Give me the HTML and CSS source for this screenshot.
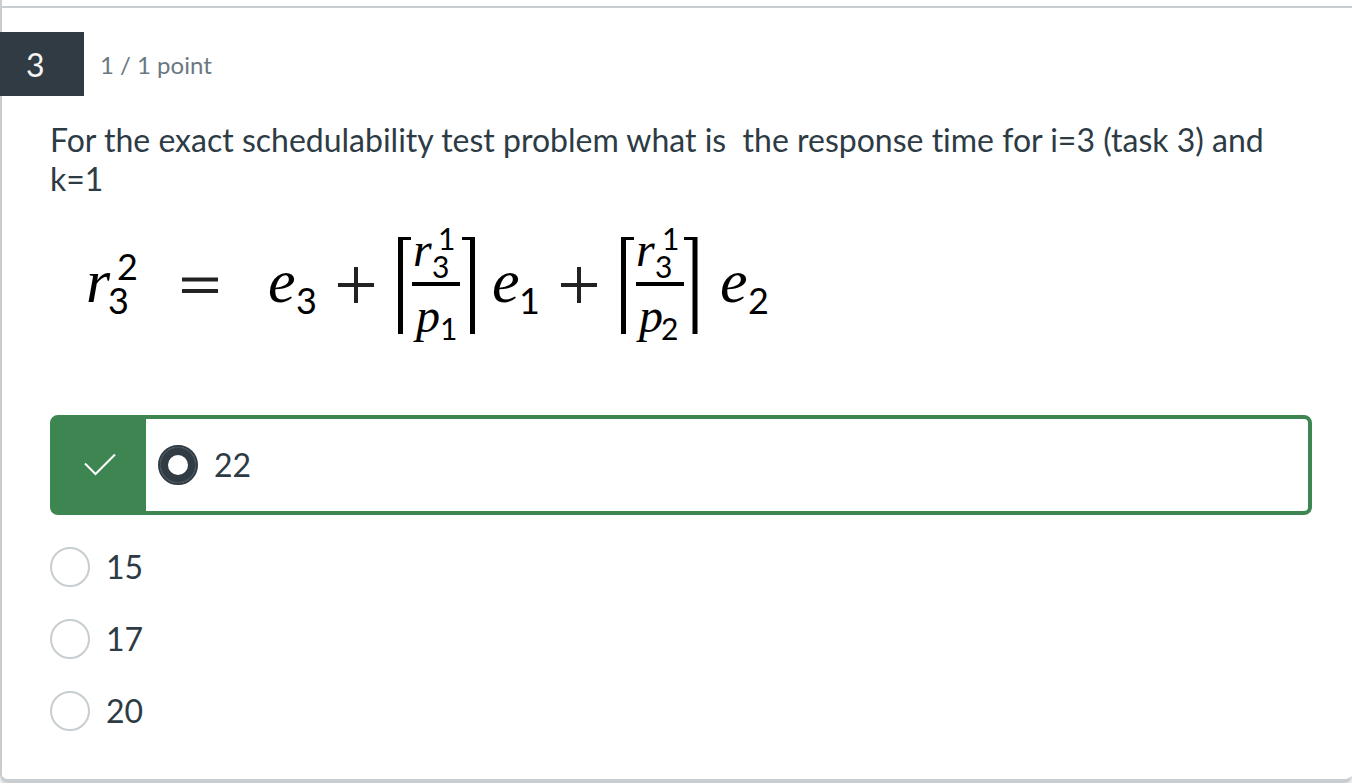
FILE: index.html
```
<!DOCTYPE html>
<html lang="en">
<head>
<meta charset="utf-8">
<meta name="viewport" content="width=device-width, initial-scale=1">
<title>Question 3</title>
<link rel="stylesheet" href="styles.css">
</head>
<body>
<main class="card">
  <section class="question">
    <header class="question-header">
      <span class="question-number">3</span>
      <span class="points">1 / 1 point</span>
    </header>
    <div class="question-body">
      <p class="prompt" id="prompt">For the exact schedulability test problem what is&nbsp; the response time for i=3 (task 3) and k=1</p>
      <svg class="formula" width="740" height="144" viewBox="50 215 740 144" role="img" aria-label="Response time equation">
        <g class="variable">
          <text x="86" y="302">r</text>
          <text x="268" y="302">e</text>
          <text x="492" y="302">e</text>
          <text x="720" y="302">e</text>
        </g>
        <g class="variable variable-small">
          <text x="413" y="266">r</text>
          <text x="416" y="332">p</text>
          <text x="636" y="266">r</text>
          <text x="639" y="332">p</text>
        </g>
        <g class="script">
          <text x="117" y="280">2</text>
          <text x="108" y="314">3</text>
          <text x="296" y="314">3</text>
          <text x="519" y="314">1</text>
          <text x="748" y="314">2</text>
        </g>
        <g class="script script-small">
          <text x="438" y="250">1</text>
          <text x="432" y="278">3</text>
          <text x="440" y="340">1</text>
          <text x="662" y="250">1</text>
          <text x="655" y="278">3</text>
          <text x="661" y="340">2</text>
        </g>
        <path class="operator" d="M182 279.5H218M182 291H218M338 285H374M356 267V303M561 285H597M579 267V303"/>
        <path class="fraction-bar" d="M412 284H460M636 284H684"/>
        <path class="bracket-side" d="M400.500 237V334M472.500 237V334M623.500 237V334M695 237V334"/>
        <path class="bracket-top" d="M398 238.500H411M462 238.500H475M621 238.500H634M684 238.500H697"/>
      </svg>
      <div class="answers" role="radiogroup" aria-labelledby="prompt">
        <div class="correct">
          <span class="correct-mark">
            <svg width="32" height="24" viewBox="0 0 32 24" aria-hidden="true"><path d="M1 10.500L11.500 21L31 1.500" fill="none" stroke="#fff" stroke-width="2"/></svg>
          </span>
          <label class="answer"><input class="radio" type="radio" name="answer" checked><span>22</span></label>
        </div>
        <label class="answer"><input class="radio" type="radio" name="answer"><span>15</span></label>
        <label class="answer"><input class="radio" type="radio" name="answer"><span>17</span></label>
        <label class="answer"><input class="radio" type="radio" name="answer"><span>20</span></label>
      </div>
    </div>
  </section>
</main>
</body>
</html>
```
FILE: styles.css
```
* {
  box-sizing: border-box;
}

body {
  margin: 0;
  background: #fff;
  color: #2d3b45;
  font-family: Lato, "Open Sans", sans-serif;
  font-size: 32px;
  font-variant-ligatures: none;
  line-height: 39px;
}

.card {
  padding-top: 6px;
  border-left: 2px solid #c7cdd1;
  border-bottom: 4px solid #c7cdd1;
  border-radius: 0 0 8px 8px;
  box-shadow: 0 2px 4px #c7cdd1;
}

.question {
  padding: 24px 0 48px;
  border-top: 2px solid #c7cdd1;
}

.question-header {
  display: flex;
  align-items: center;
  gap: 16px;
  margin-left: -2px;
}

.question-number {
  width: 84px;
  height: 64px;
  padding-left: 26px;
  background: #303b44;
  color: #f5f5f5;
  line-height: 66px;
}

.points {
  color: #6b7780;
  font-size: 24px;
}

.question-body {
  padding: 24px 40px 0 48px;
}

.prompt {
  margin: 0;
  padding-right: 16px;
}

.formula {
  display: block;
  max-width: 100%;
  margin-top: 17px;
}

.variable {
  font-family: "Liberation Serif", serif;
  font-size: 62px;
  font-style: italic;
}

.variable-small {
  font-size: 48px;
}

.script {
  font-family: Lato, sans-serif;
  font-size: 36px;
}

.script-small {
  font-size: 30px;
}

.operator,
.fraction-bar,
.bracket-side,
.bracket-top {
  fill: none;
  stroke: #000;
  stroke-width: 4;
}

.operator {
  stroke: #222;
}

.bracket-side {
  stroke-width: 5;
}

.bracket-top {
  stroke-width: 3;
}

.answers {
  display: flex;
  flex-direction: column;
  gap: 32px;
  margin-top: 56px;
}

.correct {
  display: flex;
  border: 4px solid #3e8651;
  border-radius: 8px;
}

.correct-mark {
  display: flex;
  align-items: center;
  justify-content: center;
  width: 92px;
  height: 92px;
  background: #3e8651;
}

.correct .answer {
  padding-left: 12px;
}

.answer {
  display: flex;
  align-items: center;
  gap: 16px;
  line-height: 38px;
}

.radio {
  appearance: none;
  width: 40px;
  height: 40px;
  margin: 0;
  border: 2px solid #c7cdd1;
  border-radius: 50%;
  background: #fff;
}

.radio:checked {
  border-color: #303b44;
  box-shadow: inset 0 0 0 1px #4a545c, inset 0 0 0 8px #303b44;
}
```
